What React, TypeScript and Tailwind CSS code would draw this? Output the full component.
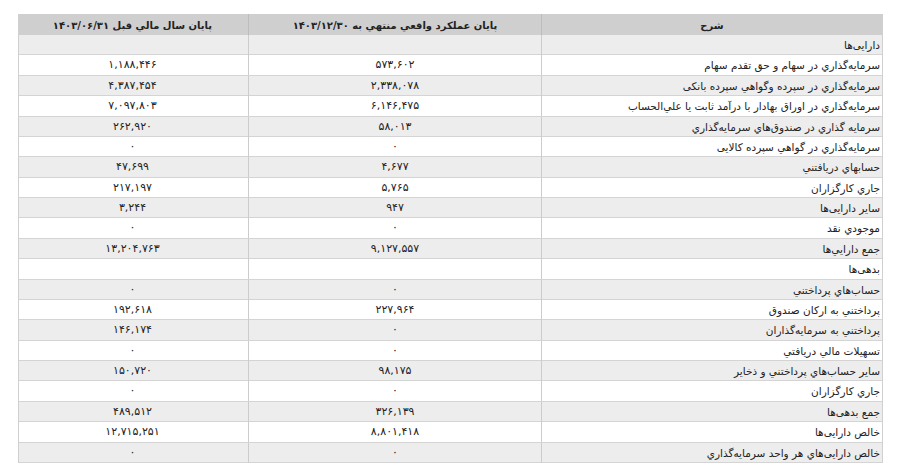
const rows: [string, string, string][] = [
  ["دارایی‌ها", "", ""],
  ["سرمایه‌گذاري در سهام و حق تقدم سهام", "۵۷۳,۶۰۲", "۱,۱۸۸,۴۴۶"],
  ["سرمایه‌گذاري در سپرده وگواهي سپرده بانکی", "۲,۳۳۸,۰۷۸", "۴,۳۸۷,۴۵۴"],
  ["سرمایه‌گذاري در اوراق بهادار با درآمد ثابت یا علي‌الحساب", "۶,۱۴۶,۴۷۵", "۷,۰۹۷,۸۰۳"],
  ["سرمایه گذاري در صندوق‌هاي سرمایه‌گذاري", "۵۸,۰۱۳", "۲۶۲,۹۲۰"],
  ["سرمایه‌گذاري در گواهي سپرده کالایی", "۰", "۰"],
  ["حسابهاي دریافتني", "۴,۶۷۷", "۴۷,۶۹۹"],
  ["جاري کارگزاران", "۵,۷۶۵", "۲۱۷,۱۹۷"],
  ["سایر دارایی‌ها", "۹۴۷", "۳,۲۴۴"],
  ["موجودي نقد", "۰", "۰"],
  ["جمع دارایي‌ها", "۹,۱۲۷,۵۵۷", "۱۳,۲۰۴,۷۶۳"],
  ["بدهی‌ها", "", ""],
  ["حساب‌هاي پرداختني", "۰", "۰"],
  ["پرداختني به ارکان صندوق", "۲۲۷,۹۶۴", "۱۹۲,۶۱۸"],
  ["پرداختني به سرمایه‌گذاران", "۰", "۱۴۶,۱۷۴"],
  ["تسهیلات مالي دریافتي", "۰", "۰"],
  ["سایر حساب‌هاي پرداختني و ذخایر", "۹۸,۱۷۵", "۱۵۰,۷۲۰"],
  ["جاري کارگزاران", "۰", "۰"],
  ["جمع بدهی‌ها", "۳۲۶,۱۳۹", "۴۸۹,۵۱۲"],
  ["خالص دارایی‌ها", "۸,۸۰۱,۴۱۸", "۱۲,۷۱۵,۲۵۱"],
  ["خالص دارایی‌هاي هر واحد سرمایه‌گذاري", "۰", "۰"],
];

export default function App() {
  return (
    <div className="w-[900px] h-[473px] bg-white pt-[14px] pl-[18px] font-['DejaVu_Sans',sans-serif] text-[11px] text-[#222]">
      <div dir="rtl" className="w-[865px] border-x border-[#d0d0d0]">
        {/* Header */}
        <div className="grid grid-cols-[340px_293px_232px] h-[21px] bg-[#cfcfcf] font-bold text-[10px] leading-[23px]">
          <div className="text-center">شرح</div>
          <div className="text-center border-r border-[#bdbdbd]">پایان عملکرد واقعي منتهي به ۱۴۰۳/۱۲/۳۰</div>
          <div className="text-center border-r border-[#bdbdbd]">پایان سال مالي قبل ۱۴۰۳/۰۶/۳۱</div>
        </div>

        {rows.map((r, i) => (
          <div
            key={i}
            className={`grid grid-cols-[340px_293px_232px] h-[20.38px] leading-[20px] border-b border-[#d4d4d4] ${
              i % 2 === 0 ? "bg-[#ededed]" : "bg-white"
            }`}
          >
            <div className="pr-[2px] text-right text-[10.5px]">{r[0]}</div>
            <div className="text-center border-r border-[#cccccc]">{r[1]}</div>
            <div className="text-center border-r border-[#cccccc]">{r[2]}</div>
          </div>
        ))}
      </div>
    </div>
  );
}
